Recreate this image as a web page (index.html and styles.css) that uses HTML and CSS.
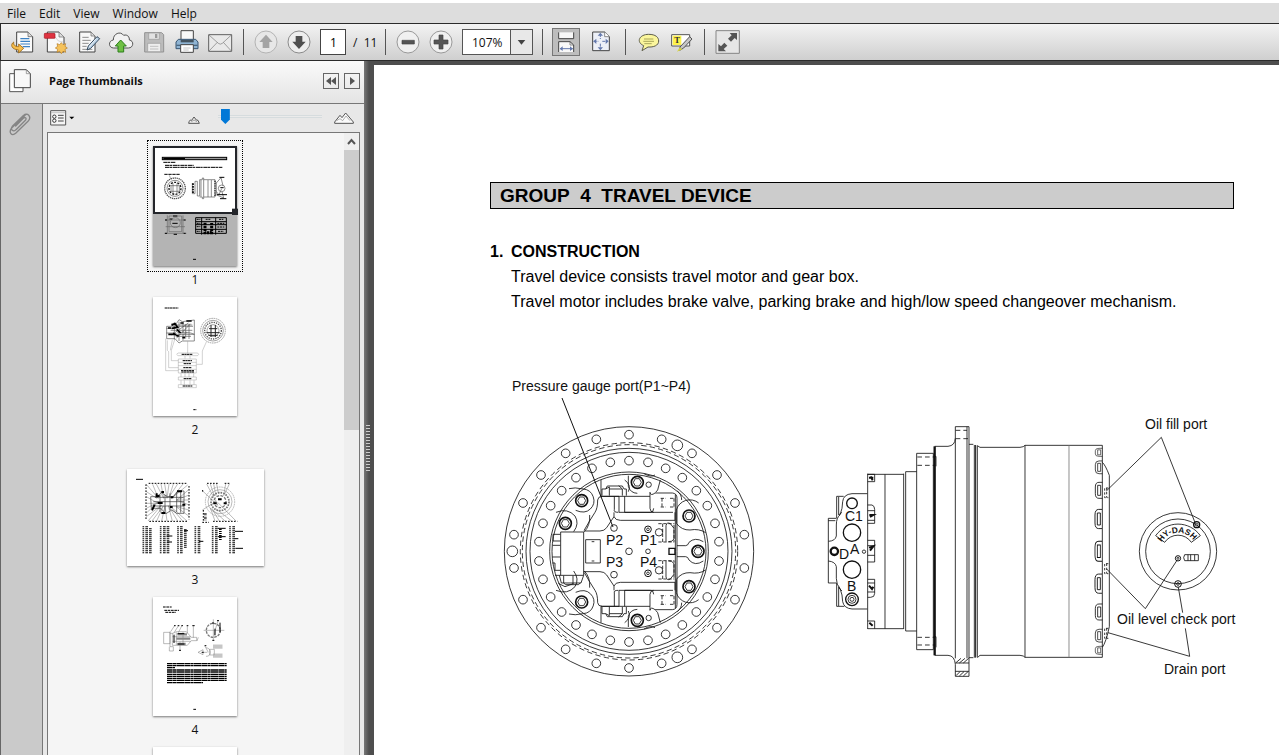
FILE: index.html
```html
<!DOCTYPE html>
<html lang="en">
<head>
<meta charset="utf-8">
<title>Travel Device</title>
<link rel="stylesheet" href="styles.css">
</head>
<body>
<nav class="menubar" aria-label="Menu">
  <button>File</button><button>Edit</button><button>View</button><button>Window</button><button>Help</button>
</nav>

<header class="toolbar">
  <button class="tool" aria-label="Open"><svg viewBox="0 0 84 84">
    <path d="M26 12H60L74 26V72H26Z" fill="#fafafa" stroke="#444" stroke-width="3"/><path d="M60 12V26H74" fill="#ddd" stroke="#555" stroke-width="2"/>
    <path d="M37 32H64M37 40H66M37 48H66M44 56H66" stroke="#3c82c4" stroke-width="3.5"/>
    <path d="M17 42C6 50 10 64 32 66V75L47 61 32 48V56C22 56 16 52 17 42Z" fill="#f6bd4b" stroke="#9a6512" stroke-width="2.5"/></svg></button>
  <button class="tool" aria-label="Create PDF"><svg viewBox="0 0 84 84">
    <path d="M19 12H54L69 27V72H19Z" fill="#f8f8f8" stroke="#444" stroke-width="3"/><path d="M54 12V27H69" fill="#ddd" stroke="#666" stroke-width="2"/><path d="M42 26Q50 42 66 42" fill="none" stroke="#bbb" stroke-width="2"/>
    <rect x="10" y="16" width="32" height="15" rx="2" fill="#df3340" stroke="#a51420" stroke-width="2"/>
    <path d="M61 44L66 50 74 47 72 55 79 60 72 64 74 73 66 70 61 77 56 70 48 73 50 64 43 60 50 55 48 47 56 50Z" fill="#f5c25a" stroke="#b4781e" stroke-width="2"/></svg></button>
  <button class="tool" aria-label="Edit document"><svg viewBox="0 0 84 84">
    <path d="M17 12H51L63 24V72H17Z" fill="#f8f8f8" stroke="#444" stroke-width="3"/><path d="M51 12V24H63" fill="#ddd" stroke="#666" stroke-width="2"/>
    <path d="M25 28H44M25 37H50M25 46H44M25 55H38M25 64H55" stroke="#777" stroke-width="2.5"/>
    <path d="M69 26L77 32 50 61 39 66 43 54Z" fill="#bfd5e8" stroke="#33495e" stroke-width="3"/><path d="M66 32L46 56" stroke="#fff" stroke-width="2"/></svg></button>
  <button class="tool" aria-label="Upload"><svg viewBox="0 0 84 84">
    <path d="M20 60C4 60 3 38 19 36 18 17 40 8 50 22 62 18 68 28 67 36 82 38 80 60 64 60Z" fill="#f2f2f2" stroke="#555" stroke-width="3"/>
    <path d="M41 36L58 54H50V72H33V54H25Z" fill="#6fc044" stroke="#2c7e1c" stroke-width="3"/></svg></button>
  <button class="tool" aria-label="Save"><svg viewBox="0 0 84 84">
    <path d="M14 14H65L71 20V72H14Z" fill="#bcbcbc" stroke="#929292" stroke-width="3"/><path d="M26 15H58V34H26Z" fill="#e2e2e2" stroke="#999" stroke-width="2"/><path d="M45 18H52V30H45Z" fill="#999"/><path d="M23 46H62V71H23Z" fill="#eee" stroke="#999" stroke-width="2"/><path d="M30 55H55M30 63H55" stroke="#aaa" stroke-width="2"/></svg></button>
  <button class="tool" aria-label="Print"><svg viewBox="0 0 84 84">
    <path d="M24 8H61V36H24Z" fill="#f8f8f8" stroke="#444" stroke-width="3"/>
    <path d="M16 34H68L75 42V62H9V42Z" fill="#8fb4d3" stroke="#385571" stroke-width="3"/><path d="M10 52H74" stroke="#49667f" stroke-width="4"/><path d="M23 36H62V43H23Z" fill="#44535f"/>
    <path d="M23 50H61V73H23Z" fill="#fff" stroke="#444" stroke-width="3"/><path d="M31 60H53M31 66H47" stroke="#aaa" stroke-width="2"/></svg></button>
  <button class="tool" aria-label="Email"><svg viewBox="0 0 84 84">
    <path d="M8 20H77V70H8Z" fill="#e9e9e9" stroke="#606060" stroke-width="3"/><path d="M9 21L37 46Q43 51 49 46L76 21M9 69L34 43M76 69L52 43" fill="none" stroke="#777" stroke-width="2"/></svg></button>
  <span class="separator"></span>
  <button class="tool" aria-label="Previous page"><svg viewBox="0 0 84 84"><circle cx="42" cy="42" r="33" fill="#e7e7e7" stroke="#aaa" stroke-width="2.5"/><path d="M42 20L62 42H52V60H32V42H22Z" fill="#a4a4a4"/></svg></button>
  <button class="tool" aria-label="Next page"><svg viewBox="0 0 84 84"><circle cx="42" cy="42" r="33" fill="#eee" stroke="#777" stroke-width="2.5"/><path d="M42 63L62 41H52V24H32V41H22Z" fill="#505050"/></svg></button>
  <input class="page-number" aria-label="Page number" value="1">
  <span class="page-total">/&nbsp; 11</span>
  <span class="separator"></span>
  <button class="tool" aria-label="Zoom out"><svg viewBox="0 0 84 84"><circle cx="42" cy="42" r="33" fill="#f0f0f0" stroke="#888" stroke-width="2.5"/><path d="M24 37H61V48H24Z" fill="#555" stroke="#444" stroke-width="2"/></svg></button>
  <button class="tool" aria-label="Zoom in"><svg viewBox="0 0 84 84"><circle cx="42" cy="42" r="33" fill="#f0f0f0" stroke="#888" stroke-width="2.5"/><path d="M36 21H48V36H63V48H48V63H36V48H21V36H36Z" fill="#555" stroke="#444" stroke-width="2"/></svg></button>
  <div class="zoom-box"><select aria-label="Zoom level"><option>107%</option><option>100%</option></select><svg class="zoom-arrow" viewBox="0 0 22 24"><path d="M7 10H15L11 15Z" fill="#444"/></svg></div>
  <span class="separator"></span>
  <button class="tool view active" aria-label="Fit width"><svg viewBox="3 3 78 78">
    <path d="M20 13V32H65V13" fill="#f8f8f8" stroke="#444" stroke-width="3"/><path d="M20 72V41H54L65 51V72" fill="#f8f8f8" stroke="#444" stroke-width="3"/><path d="M54 41V51H65" fill="none" stroke="#555" stroke-width="2"/><path d="M25 62H62" stroke="#6378ac" stroke-width="3"/><path d="M23 62L32 55V69ZM63 62L54 55V69Z" fill="#6378ac"/></svg></button>
  <button class="tool view" aria-label="Fit page"><svg viewBox="0 0 84 84">
    <path d="M17 12H53L67 26V68H17Z" fill="#edf0f7" stroke="#444" stroke-width="3"/><path d="M53 12V26H67" fill="#fff" stroke="#555" stroke-width="2"/><path d="M40 18V33M40 47V63M20 40H34M46 40H63" stroke="#6378ac" stroke-width="3" stroke-dasharray="9 3"/><path d="M40 14L32 23H48ZM40 67L32 58H48ZM19 40L28 32V48ZM65 40L56 32V48Z" fill="#6378ac"/></svg></button>
  <span class="separator"></span>
  <button class="tool" aria-label="Comment"><svg viewBox="0 0 84 84"><path d="M44 19C65 19 74 28 74 39 74 53 58 58 42 57L24 68 29 53C5 42 16 19 44 19Z" fill="#fbf69c" stroke="#5e5e4d" stroke-width="3"/><path d="M30 33H58M28 40H60M31 47H53" stroke="#99964d" stroke-width="2.5"/></svg></button>
  <button class="tool" aria-label="Highlight text"><svg viewBox="0 0 84 84"><path d="M14 20H68V54H14Z" fill="#fff" stroke="#555" stroke-width="3"/><path d="M17 23H43V51H17Z" fill="#fff34d"/><text x="22" y="46" class="highlight-letter">T</text><path d="M68 26L75 33 50 60 38 67 39 57Z" fill="#c6c6c6" stroke="#555" stroke-width="3"/><path d="M38 58L46 64 30 71Z" fill="#d7d33d"/></svg></button>
  <span class="separator"></span>
  <button class="tool" aria-label="Full screen"><svg viewBox="0 0 84 84"><path d="M9 8H79V76H9Z" fill="#e6e6e6" stroke="#858585" stroke-width="3"/><path d="M50 15H72V36L65 30 54 41 45 32 56 22ZM16 70V48L24 55 34 44 43 53 32 63 39 70Z" fill="#555"/></svg></button>
</header>

<div class="workspace">
  <aside class="sidebar">
    <div class="panel-header">
      <svg class="pages-icon" viewBox="0 0 66 72"><path d="M2 14H42V68H2Z" fill="#fff" stroke="#555" stroke-width="3"/><path d="M16 2H52L64 14V56H16Z" fill="#f8f8f8" stroke="#444" stroke-width="3"/><path d="M52 2V14H64" fill="none" stroke="#777" stroke-width="2"/></svg>
      <h1>Page Thumbnails</h1>
      <button class="mini" aria-label="Collapse"><svg viewBox="0 0 14 14"><path d="M7 3V11L2 7ZM12 3V11L7 7Z" fill="#555"/></svg></button>
      <button class="mini" aria-label="Expand"><svg viewBox="0 0 14 14"><path d="M5 3V11L10 7Z" fill="#555"/></svg></button>
    </div>
    <div class="panel-body">
      <div class="nav-strip"><button class="attach" aria-label="Attachments"><svg viewBox="0 0 72 78"><path d="M57 10L14 51C4 63 14 78 26 67L63 31C76 17 60 2 50 13L16 46C9 55 19 65 27 56L56 27C60 21 53 17 49 22L26 45" fill="none" stroke="#858585" stroke-width="4" stroke-linejoin="round" stroke-linecap="round"/></svg></button></div>
      <div class="panel-main">
        <div class="options">
          <button class="options-menu" aria-label="Options"><svg viewBox="0 0 75 48"><path d="M2 2H47V45H2Z" fill="#f5f5f5" stroke="#555" stroke-width="3"/><path d="M3 8H46" stroke="#aaa" stroke-width="2"/><g fill="#fff" stroke="#333" stroke-width="3"><circle cx="13" cy="20" r="5"/><circle cx="13" cy="32" r="5"/></g><path d="M24 16H41M24 24H41M24 33H41" stroke="#444" stroke-width="3"/><path d="M58 20H73L65 28Z"/></svg></button>
          <svg class="small-hills" viewBox="0 0 36 24"><path d="M2 22Q2 17 7 12L11 13 18 3 25 12 30 13 34 22Z" fill="#eee" stroke="#555" stroke-width="3"/><path d="M10 17L18 12 27 17" fill="none" stroke="#777" stroke-width="2"/></svg>
          <input class="size-slider" type="range" min="0" max="100" value="3" aria-label="Thumbnail size">
          <svg class="large-hills" viewBox="0 0 60 36"><path d="M2 34V30L18 10 24 17 35 3 58 30V34Z" fill="#fafafa" stroke="#555" stroke-width="3"/><path d="M8 26L18 20 26 26 36 12 48 26" fill="none" stroke="#888" stroke-width="2"/></svg>
        </div>
        <div class="list">
          <div class="thumbs">
            <a class="thumb selected" href="#page"><span class="sheet-area"><svg class="sheet" width="84" height="120" viewBox="342 48 252 360">
              <rect x="342" y="48" width="252" height="360" fill="#fff"/><rect x="342" y="252" width="252" height="156" fill="#b4b4b4"/>
              <g fill="none" stroke="#000" stroke-width="3">
                <rect x="370" y="82" width="193" height="7" fill="#999"/><path d="M373 86H438" stroke-width="4"/><path d="M373 97H410M378 106H464M378 112H550" stroke-dasharray="13 1 7 2"/><path d="M376 133H422" stroke-dasharray="10 2"/><path d="M391 136L396 148" stroke-width="1"/>
                <g stroke="#555" stroke-width="2"><circle cx="408" cy="175" r="31" stroke-width="4" stroke-dasharray="4 2"/><circle cx="408" cy="175" r="24"/><circle cx="408" cy="175" r="18" stroke="#111" stroke-width="4" stroke-dasharray="6 4"/><path d="M396 167H421V184H396ZM402 160V190M414 160V190"/><path d="M460 159V191H468V154H475V198H482V149H490V144H494V206H490V201H482M494 149H528V201H494M507 150V201M517 150V201M528 154L532 160V190L528 196M486 150V200"/><circle cx="548" cy="175" r="10"/><path d="M531 160L546 143 552 167M531 184L540 194 548 176M531 194L554 204 549 185"/></g>
                <path d="M462 160V190" stroke-width="5" stroke-dasharray="5 3"/><path d="M528 152V198" stroke-dasharray="4 3"/><path d="M541 142H556M534 194H564M543 206H562M544 173H554"/>
                <g stroke="#666" stroke-width="2"><path d="M385 256V310M432 256V310M378 270H440M380 290H438M376 310H442M390 258H428V305H390Z"/><circle cx="409" cy="278" r="15"/></g><path d="M378 270H384M434 270H440M402 258H415M400 280H416M392 267H400M404 313H414M378 310H384M434 310H440"/>
                <path d="M470 263H562V310H470ZM488 263V314M530 263V314M470 275H562M470 284H562M470 298H562"/><path d="M473 268H484M500 268H515M540 268H553M473 280H484M473 290H484M473 304H484M535 280H556M535 291H556M537 304H554" stroke-dasharray="6 2"/><path d="M498 278V308H518V278" stroke-width="9" stroke-dasharray="7 2"/><path d="M462 388H471"/>
              </g>
              <path d="M345 51H591V249H345Z" fill="none" stroke="#24262b" stroke-width="6"/><path d="M579 236H597V255H579Z" fill="#24262b"/></svg></span><span class="thumb-label">1</span></a>

            <a class="thumb" href="#page"><span class="sheet-area"><svg class="sheet" width="84" height="119" viewBox="132 20 252 357">
              <rect x="132" y="20" width="252" height="357" fill="#fff"/><g fill="none" stroke="#777" stroke-width="2">
              <path d="M188 100H202L210 88 220 94 256 89V152H220L210 158 198 145H173V108H188ZM190 108H252M185 120H250M185 132H256M196 96V148M210 94V152M222 96V150M230 102V145M240 100V146M172 114H195M172 128H195M202 144L245 100M188 134L238 98M224 132Q235 122 256 132M203 104H250M200 138H246M205 126H235" stroke="#555"/>
              <path d="M188 105L198 100 206 111 188 114M203 117L215 128M209 138L192 129M177 113H186M178 132H202M214 98H224M232 92H248M220 142H228" stroke="#000" stroke-width="5"/>
              <circle cx="312" cy="121" r="37" stroke-dasharray="5 2"/><circle cx="312" cy="121" r="31"/><circle cx="312" cy="121" r="25" stroke="#555" stroke-width="4" stroke-dasharray="4 3"/><circle cx="312" cy="121" r="18"/><path d="M300 115H325M292 127H332M306 104V140M319 104V140M298 135H326" stroke="#222" stroke-width="3"/>
              <path d="M170 145V241H208M175 150V180L179 184V232H208M197 148L187 180V211H208M190 148L184 180M236 153V188M292 155L280 182V222H263M207 188H266L269 192 266 196H207L203 192ZM208 206H262V248H208ZM208 216H262M208 226H262M208 237H262M216 249V260M228 249V260M240 249V260M254 249V260M208 260H262V269H208ZM216 270V283M226 270V283M243 270V283M255 270V283M208 283H262V292H208ZM228 197V205M243 197V205" stroke-width="1"/></g>
              <path d="M167 53H208M218 192H251M221 211H249M224 220H246M223 232H248M216 241H256M217 245H255M224 265H247M221 287H250M253 358H262" stroke="#000" stroke-width="3"  stroke-dasharray="7 1"/></svg></span><span class="thumb-label">2</span></a>

            <a class="thumb" href="#page"><span class="sheet-area"><svg class="sheet" width="137" height="97" viewBox="51 27 411 291">
              <rect x="51" y="27" width="411" height="291" fill="#fff"/><path d="M78 58H99" stroke="#000" stroke-width="3"/>
              <g fill="none" stroke="#777" stroke-width="1.5"><path d="M109 73L145 115 128 73M139 72L161 115 153 72M164 72L171 115 177 72M190 72L178 110 203 72M219 72L185 115 233 75M235 90L200 120 237 105M237 120H200L237 135M237 150L198 140 236 168M231 183L180 138 218 183M203 183L175 137 187 183M171 183L165 138 155 183M140 183L160 138 126 183M114 183L155 135 109 170M109 159L144 127 109 145M109 130H144L109 110M109 95L142 116"/>
              <path d="M122 110H140L155 98 172 110H190L205 93H222V160H200L185 150 168 161 152 145H124ZM135 112H220M130 125H222M128 138H222M150 104V155M165 105V155M180 100V150M200 96V156M212 96V158" stroke="#333" stroke-width="2"/>
              <circle cx="330" cy="125" r="44" stroke-dasharray="5 2"/><circle cx="330" cy="125" r="36"/><circle cx="330" cy="125" r="27" stroke-width="5" stroke-dasharray="5 3"/><circle cx="330" cy="125" r="18" stroke-width="4" stroke-dasharray="8 4"/><path d="M277 92L324 136 290 72M301 72L312 105M311 72L318 108M320 72L325 100M347 72L341 108M358 72L344 102M277 150L320 123M378 183L323 127M365 183L316 145M345 183L309 150M328 183L305 145M315 183L301 144"/></g>
              <path d="M108 73V180M237 78V178M116 70H233M118 184H233M291 70H323M344 70H360M309 184H382M278 90V96M280 150V187M277 187H297" fill="none" stroke="#000" stroke-width="3" stroke-dasharray="5 4"/><path d="M286 159V181" stroke="#333" stroke-width="8" stroke-dasharray="2 2"/>
              <path d="M138 108H149M154 96H162M201 94H216M182 112H190M217 134H226M143 129H158M180 141H188M154 159H166M126 151L134 134M140 100V112M310 130H320M341 130H350M324 118H335" stroke="#000" stroke-width="6"/>
              <g fill="none" stroke="#000"><path d="M100 199V282M152 199V282M204 199V282M256 199V282M308 199V282M360 199V282" stroke-width="5" stroke-dasharray="3 3"/><path d="M110 199V282M121 205V282M163 199V282M174 199V282M214 199V282M226 208V264M267 199V282M319 199V282M331 207V240M371 199V282" stroke-width="8" stroke-dasharray="3 3"/><path d="M170 228H187M171 246H186M323 205H347M324 230H347M375 214H399M376 265H399M222 212H234M267 244H280M374 236H385" stroke-width="3"/></g></svg></span><span class="thumb-label">3</span></a>

            <a class="thumb" href="#page"><span class="sheet-area"><svg class="sheet" width="84" height="119" viewBox="132 21 252 357">
              <rect x="132" y="21" width="252" height="357" fill="#fff"/><path d="M162 51H188M166 61H210M169 67H201M253 358H262" stroke="#000" stroke-width="3" stroke-dasharray="8 2"/>
              <g fill="none" stroke="#777" stroke-width="1.5"><path d="M164 127H183V161H164ZM183 125V170H193V183H181V170M183 130H192L202 125H232L247 142H263V152H247L235 166H190V130M196 108L185 125M208 108L195 128M218 108L208 128M235 108V130M253 108V143M213 155V180M190 140H245M190 154H245M202 127V165M222 127V165M268 142L264 153"/><circle cx="313" cy="121" r="21" stroke-width="4" stroke-dasharray="8 3"/><path d="M284 121H346M313 88V151M327 92L318 122 316 136M267 187L282 179V194ZM282 187H295M291 173Q304 175 304 187T291 199M302 178H316V195H302ZM287 167L298 187"/><path d="M202 146H244M205 133H234M205 162H230" stroke="#888" stroke-width="7"/></g>
              <path d="M195 134V159M195 107H200M206 107H211M217 107H222M233 107H238M250 107H257M210 181H216M310 151H316M324 92H330M318 116V136M333 98V127M309 99H315M278 187H284M287 167H292M206 131H226M206 162H226" stroke="#000" stroke-width="3"/>
              <path d="M313 170H341M313 197H341" stroke="#aaa" stroke-width="13" stroke-dasharray="2 1"/>
              <path d="M174 221H353M174 227H353M174 233H198M174 240H353M174 246H353M174 253H353M174 259H353M174 265H353M174 271H353M174 278H282" stroke="#000" stroke-width="4" stroke-dasharray="17 1 9 1 23 1"/></svg></span><span class="thumb-label">4</span></a>

            <a class="thumb" href="#page" aria-label="Next page"><span class="sheet-area"><svg class="sheet" width="84" height="119" viewBox="0 0 84 119"><rect width="84" height="119" fill="#fff"/></svg></span></a>
          </div>
          <div class="scrollbar"><button class="scroll-up" aria-label="Scroll up"><svg viewBox="0 0 15 17"><path d="M4 11L7.500 7 11 11" fill="none" stroke="#555" stroke-width="2"/></svg></button><div class="scroll-thumb"></div></div>
        </div>
      </div>
    </div>
  </aside>
  <div class="splitter"><span class="grip"></span></div>

  <main class="document" id="page">
    <article class="paper">
      <h2 class="group-title">GROUP&nbsp; 4&nbsp; TRAVEL DEVICE</h2>
      <section class="topic">
        <h3><span class="num">1.</span>CONSTRUCTION</h3>
        <p>Travel device consists travel motor and gear box.</p>
        <p>Travel motor includes brake valve, parking brake and high/low speed changeover mechanism.</p>
      </section>
      <svg class="figure" viewBox="490 370 744 320" role="img" aria-label="Travel device drawing">
        <defs>
          <circle id="hole" r="13"/>
          <g id="bolt"><circle r="18" stroke-width="5"/><path d="M-12 0L-6 -11H6L12 0 6 11H-6Z"/></g>
          <path id="dash-arc" d="M215 427A56 56 0 0 1 313 427"/>
          <g id="rim-half"><use href="#hole" x="402" y="59"/><use href="#hole" x="304" y="73"/><use href="#hole" x="500" y="73"/><use href="#hole" x="591" y="115"/><use href="#hole" x="212" y="115"/><use href="#hole" x="138" y="180"/><use href="#hole" x="666" y="180"/><use href="#hole" x="84" y="264"/><use href="#hole" x="720" y="264"/><use href="#hole" x="57" y="359"/><use href="#hole" x="748" y="359"/><circle cx="547" cy="91" r="16"/>
          <use href="#hole" x="402" y="137"/><use href="#hole" x="346" y="142"/><use href="#hole" x="459" y="142"/><use href="#hole" x="512" y="160"/><use href="#hole" x="291" y="160"/><use href="#hole" x="562" y="188"/><use href="#hole" x="243" y="188"/><use href="#hole" x="604" y="227"/><use href="#hole" x="200" y="227"/><use href="#hole" x="637" y="272"/><use href="#hole" x="167" y="272"/><use href="#hole" x="660" y="325"/><use href="#hole" x="144" y="325"/><use href="#hole" x="672" y="380"/><use href="#hole" x="132" y="380"/></g>
          <g id="body-half">
            <path d="M318 195V244M268 345Q282 320 300 292 308 280 308 255 309 244 322 244H465V232Q467 244 480 234H532Q546 235 546 250V409M541 238V409M318 244H372V292H534M389 244V292H466Q476 292 476 280M465 244V280Q466 292 476 292M358 244V284Q355 292 370 292M266 348H315Q328 348 335 338L357 305Q361 316 376 316H540V292M357 305V292M321 242V222H332L337 213H382L387 222H394V242M332 222L343 216V242M343 222H382V242M371 212L382 222"/>
            <path d="M400 182V214Q406 234 427 235M447 176Q468 188 480 180M496 195L488 225 482 232M389 195Q410 210 400 230M547 228Q560 238 560 255"/>
            <path d="M222 221Q238 216 265 222A35 35 0 0 1 286 282Q270 298 242 286M183 292Q218 278 240 303 254 326 236 350M268 350Q286 332 284 300"/>
            <path d="M611 264A42 42 0 0 0 544 285V325Q560 346 585 345 612 340 632 353"/>
            <path d="M497 250H513M525 250H538M497 276H513M525 276H538M501 250V276M537 250V276" stroke-dasharray="10 5"/>
            <path d="M490 326H538M490 381H538M503 326V381M537 330V380" stroke-dasharray="10 5"/><path d="M513 380V332Q516 320 526 326L537 340V372Q532 381 520 380"/>
            <circle cx="492" cy="352" r="11"/><circle cx="459" cy="343" r="10" stroke-width="3"/><circle cx="459" cy="343" r="4"/><circle cx="357" cy="339" r="10"/><circle cx="461" cy="209" r="8"/>
            <use href="#bolt" x="427" y="202"/><use href="#bolt" x="260" y="257"/><use href="#bolt" x="582" y="303"/>
          </g>
          <g id="cap"><path d="M22 -24H12Q1 -24 1 -10V10Q1 24 12 24H22M8 -15H17V15H8Z"/></g>
        </defs>

        <g class="ink" transform="translate(495 415) scale(.33333)">
          <circle cx="402" cy="409" r="374"/><circle cx="402" cy="409" r="326" stroke-dasharray="16 10"/><circle cx="402" cy="409" r="320" stroke-dasharray="16 9.500" stroke-dashoffset="12"/><circle cx="402" cy="409" r="309"/><circle cx="402" cy="409" r="297"/><circle cx="402" cy="409" r="238"/><circle cx="402" cy="409" r="231"/>
          <use href="#rim-half"/><use href="#rim-half" transform="matrix(1 0 0 -1 0 818)"/><circle cx="52" cy="409" r="16"/>
          <use href="#body-half"/><use href="#body-half" transform="matrix(1 0 0 -1 0 818)"/>
          <use href="#bolt" x="211" y="325"/><use href="#bolt" x="609" y="409"/><circle cx="402" cy="409" r="10"/><circle cx="459" cy="409" r="7"/>
          <path d="M197 351H266V481H180M197 351V481M174 378V358H196M174 378H196M173 391H196M172 426H196M196 466H180V444H172M272 374H316V444H272ZM290 380H298M290 438H298"/>
          <path d="M193 481L199 504H258L266 481M206 482V504L212 509H250L256 504M234 482V508M190 505L210 515 235 506"/>
          <path d="M546 392H572Q579 392 582 382 600 365 625 380M546 425H572Q579 425 582 435 600 455 625 438"/><path d="M522 400H540V418H522Z" stroke-width="4"/>
        </g>

        <g class="ink" transform="translate(820 415) scale(.33333)">
          <path d="M143 176V642M143 178H251M143 641H251M195 178V641" />
          <path d="M251 176V642M257 170V648M257 170H290M257 648H290M290 115V704M290 115H340M290 704H340M340 115V704"/>
          <path d="M344 94V721" stroke-width="7"/><path d="M344 94H384Q405 92 406 70V35H447V784H406V748Q404 722 384 721H344M406 70V730M441 35V730M447 88H460M447 728H460M463 90V728M472 92V726" /><path d="M467 90V728" stroke-width="3"/>
          <path d="M472 92L480 97H600Q612 96 615 91H847V727H615Q612 722 600 721H480L472 728M615 91V727" /><path d="M747 91V727" stroke="#777"/>
          <path d="M407 46H441M407 71H447M292 126H346M292 151H346M292 667H346M292 690H346" stroke-dasharray="14 9"/><path d="M341 124H348V154M341 665H348V697"/>
          <path d="M406 744H447M406 769H447M408 743L423 730M418 744L435 730M430 744L446 730M408 782L420 770M418 783L432 770M430 783L444 770"/>
          <path d="M142 236H96Q70 238 68 260 68 280 60 300 49 308 49 330V363Q46 378 25 379M142 582H96Q72 580 68 560 68 540 60 520 49 510 49 490V455Q46 440 25 438M25 310V379M25 438V504M25 310H49M25 317H46M25 504H49M50 244H71M50 244V310M56 246V300L66 292M50 504V574H73M56 515V573M56 518L66 528" /><path d="M25 379V438" />
          <circle cx="96" cy="265" r="16" stroke-width="4"/><circle cx="96" cy="353" r="26" stroke-width="4"/><circle cx="96" cy="464" r="26" stroke-width="4"/><circle cx="43" cy="409" r="11" stroke-width="7"/><circle cx="96" cy="553" r="19" stroke-width="4"/><circle cx="96" cy="553" r="12"/><circle cx="96" cy="553" r="6"/><circle cx="132" cy="410" r="5"/>
          <path d="M143 178H164V200H143M143 270H156Q164 272 164 284V325H143M143 376H164V441H143M143 493H164V535Q164 547 152 547H143M143 618H164V641M143 287H164M143 316H164M143 392H164M143 421H164M143 504H164M143 531H164"/>
          <path d="M147 188H160M152 184L158 196M148 300H160L150 306M147 398L160 394 150 407M147 512L156 522 160 515M148 623L158 632" stroke-width="6"/>
          <use href="#cap" transform="translate(825 112) scale(1 .5)"/><use href="#cap" transform="translate(825 157) scale(1 .8)"/><use href="#cap" transform="translate(825 226)"/><use href="#cap" transform="translate(824 312) scale(1 1.200)"/><use href="#cap" transform="translate(824 409) scale(1 1.250)"/><use href="#cap" transform="translate(824 506) scale(1 1.200)"/><use href="#cap" transform="translate(825 591)"/><use href="#cap" transform="translate(825 662) scale(1 .8)"/><use href="#cap" transform="translate(825 706) scale(1 .5)"/>
          <path d="M847 142Q856 150 868 181V635Q858 682 847 697"/>
          <path d="M865 219H854V248H865M860 219V248M865 446H854V476H865M860 446V476M865 640H854V670H865M860 640V670" stroke-dasharray="7 5"/>
        </g>

        <g class="ink" transform="translate(1090 400) scale(.33333)">
          <circle cx="264" cy="454" r="116"/><circle cx="264" cy="454" r="97"/>
          <path d="M197 407A82 82 0 0 1 331 407L304 427A48 48 0 0 0 224 427Z"/>
          <text class="arc-text"><textPath href="#dash-arc">HY-DASH</textPath></text>
          <circle cx="320" cy="374" r="9" stroke-width="4"/><circle cx="320" cy="374" r="4"/><circle cx="264" cy="475" r="8" stroke-width="3"/><circle cx="264" cy="475" r="3"/><circle cx="264" cy="552" r="10" stroke-width="3"/><circle cx="264" cy="552" r="4"/>
          <path d="M284 464H325V482H284Q278 473 284 464M294 464V482M302 464V482M314 464V482"/>
          <path d="M49 273L214 112 316 370M50 507L166 626 261 481M54 698L299 769 286 685M278 638L265 562"/>
        </g>
        <path class="ink-line" d="M562 398L613 527"/>
        <g class="labels">
          <text x="512" y="391">Pressure gauge port(P1~P4)</text><text x="606" y="545">P2</text><text x="640" y="545">P1</text><text x="606" y="567">P3</text><text x="640" y="567">P4</text>
          <text x="845" y="521">C1</text><text x="850" y="554">A</text><text x="839" y="559">D</text><text x="847" y="591">B</text>
          <text x="1145" y="429">Oil fill port</text><text x="1117" y="624">Oil level check port</text><text x="1164" y="674">Drain port</text>
        </g>
      </svg>
    </article>
  </main>
</div>
</body>
</html>
```

FILE: styles.css
```css
* { box-sizing: border-box; }
body {
  margin: 0;
  height: 100vh;
  display: flex;
  flex-direction: column;
  overflow: hidden;
  border-top: 3px solid #fff;
  background: #4e4e4e;
  color: #111;
  font-family: "Open Sans", "Noto Sans", sans-serif;
  font-size: 12px;
}
button {
  padding: 0;
  border: 0;
  background: none;
  color: inherit;
  font: inherit;
}
svg { display: block; }
.menubar {
  flex: none;
  display: flex;
  gap: 13px;
  height: 20px;
  padding-left: 7px;
  background: #ddd;
}
.toolbar {
  flex: none;
  display: flex;
  align-items: center;
  gap: 5px;
  height: 38px;
  padding-left: 7px;
  border: solid #2b2b2b;
  border-width: 1px 0 1px 1px;
  background: linear-gradient(#f3f3f3, #cfcfcf);
}
.tool { width: 28px; height: 28px; flex: none; }
.tool svg { width: 28px; height: 28px; }
.tool.view { margin: 0 1px; }
.tool.active { background: #bdbdbd; border: 1px solid #777; }
.tool.active svg { width: 26px; height: 26px; }
.separator {
  width: 1px;
  height: 26px;
  flex: none;
  margin: 0 3px 0 4px;
  background: #555;
}
.page-number {
  width: 26px;
  height: 26px;
  margin-left: 2px;
  padding: 0 0 0 9px;
  border: 1px solid #444;
  background: #fff;
  font: inherit;
}
.page-total { width: 25px; padding-left: 2px; white-space: nowrap; }
.zoom-box { position: relative; margin-left: 2px; width: 71px; height: 26px; }
.zoom-box select {
  appearance: none;
  width: 100%;
  height: 100%;
  padding: 0 0 0 9px;
  border: 1px solid #555;
  border-radius: 0;
  background: #fff;
  color: #111;
  font: inherit;
}
.zoom-arrow {
  position: absolute;
  top: 1px;
  right: 1px;
  width: 22px;
  height: 24px;
  border-left: 1px solid #555;
  background: #e8e8e8;
  pointer-events: none;
}
.highlight-letter { font: bold 26px "Liberation Serif", serif; fill: #333; }

.workspace { flex: 1; display: flex; min-height: 0; }
.sidebar { width: 364px; flex: none; display: flex; flex-direction: column; border-left: 1px solid #666; }
.panel-header {
  flex: none;
  display: flex;
  align-items: center;
  gap: 5px;
  height: 43px;
  padding: 0 4px 3px 8px;
  border-bottom: 1px solid #777;
  background: linear-gradient(#fafafa, #e4e4e4);
}
.pages-icon { width: 22px; height: 24px; }
.panel-header h1 { flex: 1; margin: 0 0 0 13px; font-size: 11px; font-weight: 700; }
.mini { width: 16px; height: 16px; border: 1px solid #666; }
.panel-body { flex: 1; display: flex; min-height: 0; }
.nav-strip { width: 42px; flex: none; padding: 7px 0 0 6px; border-right: 1px solid #777; background: #cacaca; }
.attach svg { width: 24px; height: 26px; }
.panel-main { flex: 1; display: flex; flex-direction: column; min-width: 0; padding: 0 4px; background: #e8e8e8; }
.options { flex: none; display: flex; align-items: center; height: 28px; padding: 0 6px 0 3px; }
.options-menu svg { width: 25px; height: 16px; }
.small-hills { width: 12px; height: 8px; margin-left: auto; margin-top: 3px; }
.size-slider {
  appearance: none;
  width: 104px;
  height: 16px;
  margin: 0 12px 3px 18px;
  background: linear-gradient(#d6dcde, #d6dcde 1px, #ebebeb 1px, #ebebeb 2px, #d6dcde 2px) center / 100% 3px no-repeat;
}
.size-slider::-webkit-slider-thumb {
  appearance: none;
  width: 9px;
  height: 15px;
  background: #0078d7;
  clip-path: polygon(0 0, 100% 0, 100% 70%, 50% 100%, 0 70%);
}
.large-hills { width: 20px; height: 12px; }
.list { flex: 1; display: flex; min-height: 0; border: 1px solid #777; border-bottom: 0; background: #f5f5f5; }
.thumbs {
  flex: 1;
  display: flex;
  flex-direction: column;
  align-items: center;
  padding: 13px 2px 0 0;
  overflow: hidden;
}
.thumb { flex: none; height: 150px; color: #111; text-decoration: none; text-align: center; }
.sheet-area { display: flex; align-items: flex-end; height: 120px; }
.sheet { box-shadow: 0 1px 2px #777; }
.selected .sheet-area { outline: 1px dotted #000; outline-offset: 5px; }
.selected .sheet { overflow: visible; }
.thumb-label { display: block; line-height: 28px; }
.scrollbar { width: 15px; flex: none; background: #efefef; }
.scroll-up { display: block; width: 15px; height: 17px; }
.scroll-thumb { height: 45%; background: #cdcdcd; }
.splitter {
  width: 10px;
  flex: none;
  display: flex;
  align-items: center;
  padding: 80px 0 0 2px;
  background: linear-gradient(90deg, #777, #4e4e4e 5px);
}
.grip { width: 4px; height: 48px; background: radial-gradient(circle, #ccc 35%, transparent 45%) 0 0 / 2px 3px; }
.document { flex: 1; min-width: 0; padding-top: 4px; overflow: hidden; }
.paper {
  min-height: 100%;
  padding: 117px 45px 0 116px;
  background: #fff;
  color: #000;
  font-family: "Liberation Sans", Arial, sans-serif;
}
.group-title {
  margin: 0 0 30px;
  padding-left: 9px;
  border: 1px solid #000;
  background: #ccc;
  font-size: 19px;
  line-height: 25px;
}
.topic { padding-left: 21px; font-size: 16px; line-height: 25px; }
.topic h3 { margin: 0; font-size: 16px; }
.topic .num { display: inline-block; width: 21px; margin-left: -21px; }
.topic p { margin: 0; white-space: nowrap; }
.figure { width: 100%; margin-top: 56px; overflow: visible; }
.ink { fill: none; stroke: #111; stroke-width: 2.5; }
.ink-line { fill: none; stroke: #111; }
.labels { fill: #111; font-size: 14px; }
.arc-text { font-size: 25px; font-weight: bold; fill: #111; stroke: none; }
```
